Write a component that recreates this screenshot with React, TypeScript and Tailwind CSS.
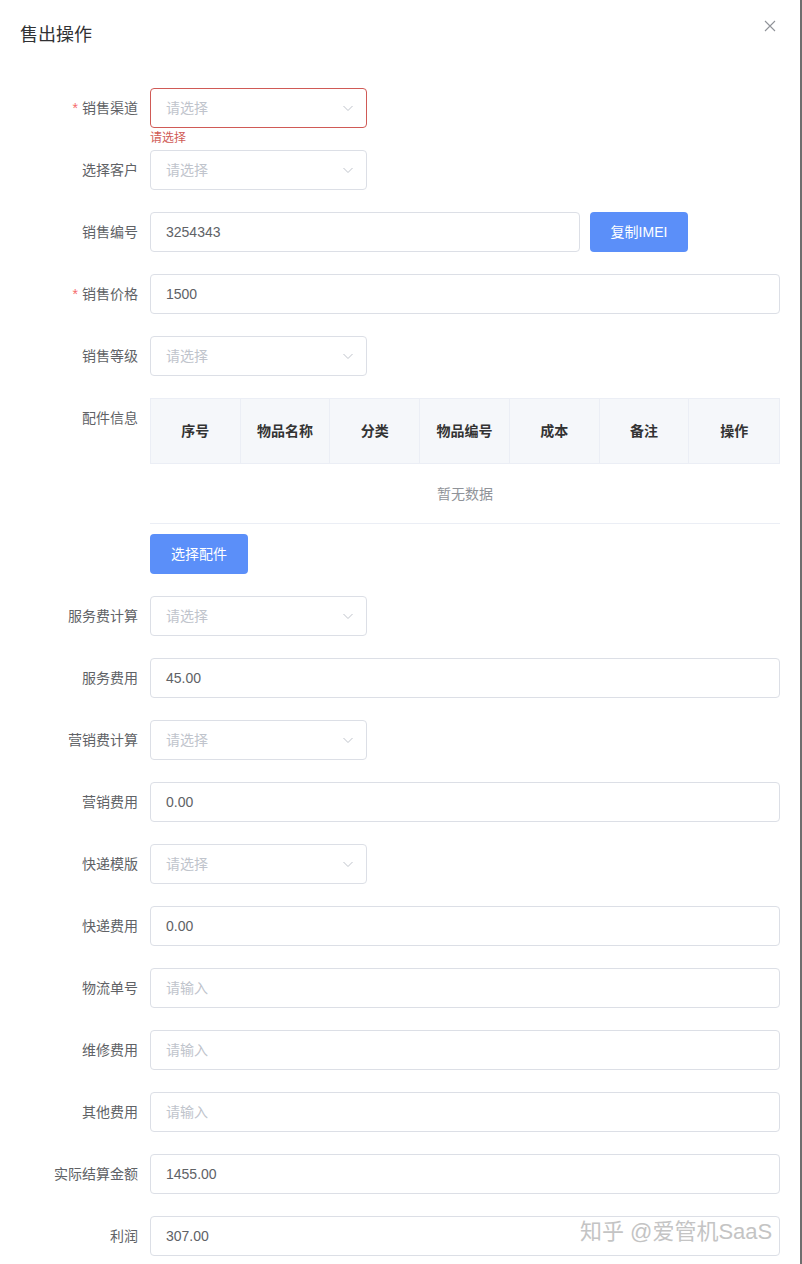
import React from 'react';

const FONT = { fontFamily: '"Liberation Sans", "Noto Sans CJK SC", sans-serif' };

const Chevron = () => (
  <svg width="12" height="12" viewBox="0 0 12 12" className="text-[#c0c4cc]">
    <path d="M1.5 4 L6 8.5 L10.5 4" fill="none" stroke="currentColor" strokeWidth="1" />
  </svg>
);

const Label = ({ text, required }: { text: string; required?: boolean }) => (
  <label className="w-[150px] shrink-0 pr-3 h-10 flex items-center justify-end text-sm text-[#606266]">
    {required && <span className="text-[#f56c6c] mr-1">*</span>}
    {text}
  </label>
);

const Select = ({ error }: { error?: boolean }) => (
  <div
    className={`w-[217px] h-10 rounded border ${
      error ? 'border-[#d05a56]' : 'border-[#dcdfe6]'
    } flex items-center justify-between pl-[15px] pr-3 text-sm text-[#c0c4cc]`}
  >
    <span>请选择</span>
    <Chevron />
  </div>
);

const Input = ({ value, placeholder, className = 'flex-1' }: { value?: string; placeholder?: string; className?: string }) => (
  <div className={`${className} h-10 rounded border border-[#dcdfe6] flex items-center px-[15px] text-sm`}>
    {value ? <span className="text-[#606266]">{value}</span> : <span className="text-[#c0c4cc]">{placeholder}</span>}
  </div>
);

const Row = ({ label, required, children }: { label: string; required?: boolean; children: React.ReactNode }) => (
  <div className="flex mb-[22px]">
    <Label text={label} required={required} />
    <div className="flex-1 flex">{children}</div>
  </div>
);

const COLS = ['序号', '物品名称', '分类', '物品编号', '成本', '备注', '操作'];

export default function App() {
  return (
    <div className="flex bg-white min-h-[1264px]" style={FONT}>
      <div className="w-[800px] relative">
        {/* Header */}
        <div className="h-[66px] flex items-center justify-between pl-5 pr-6">
          <h3 className="text-lg font-normal text-[#303133] leading-6 mt-1">售出操作</h3>
          <svg width="12" height="12" viewBox="0 0 12 12" className="text-[#909399] -mt-3.5">
            <path d="M1 1 L11 11 M11 1 L1 11" stroke="currentColor" strokeWidth="1.1" />
          </svg>
        </div>

        <div className="pt-[22px] pr-5">
          {/* 销售渠道 with error */}
          <div className="flex mb-[22px]">
            <Label text="销售渠道" required />
            <div className="relative">
              <Select error />
              <div className="absolute left-0 top-[42px] text-xs leading-4 text-[#d05a56] whitespace-nowrap">请选择</div>
            </div>
          </div>

          <Row label="选择客户">
            <Select />
          </Row>

          <Row label="销售编号">
            <Input value="3254343" className="w-[430px]" />
            <button className="ml-[10px] w-[98px] h-10 rounded bg-[#5b8ff9] text-white text-sm">复制IMEI</button>
          </Row>

          <Row label="销售价格" required>
            <Input value="1500" />
          </Row>

          <Row label="销售等级">
            <Select />
          </Row>

          {/* 配件信息 */}
          <div className="flex mb-[22px]">
            <Label text="配件信息" />
            <div className="flex-1">
              <div className="border-b border-[#ebeef5]">
                <div className="grid grid-cols-7 h-[66px] bg-[#f5f7fa] border border-[#ebeef5]">
                  {COLS.map((c, i) => (
                    <div
                      key={c}
                      className={`flex items-center justify-center text-sm font-bold text-[#333] ${
                        i < COLS.length - 1 ? 'border-r border-[#ebeef5]' : ''
                      }`}
                    >
                      {c}
                    </div>
                  ))}
                </div>
                <div className="h-[59px] flex items-center justify-center text-sm text-[#909399]">暂无数据</div>
              </div>
              <button className="mt-[10px] w-[98px] h-10 rounded bg-[#5b8ff9] text-white text-sm">选择配件</button>
            </div>
          </div>

          <Row label="服务费计算">
            <Select />
          </Row>
          <Row label="服务费用">
            <Input value="45.00" />
          </Row>
          <Row label="营销费计算">
            <Select />
          </Row>
          <Row label="营销费用">
            <Input value="0.00" />
          </Row>
          <Row label="快递模版">
            <Select />
          </Row>
          <Row label="快递费用">
            <Input value="0.00" />
          </Row>
          <Row label="物流单号">
            <Input placeholder="请输入" />
          </Row>
          <Row label="维修费用">
            <Input placeholder="请输入" />
          </Row>
          <Row label="其他费用">
            <Input placeholder="请输入" />
          </Row>
          <Row label="实际结算金额">
            <Input value="1455.00" />
          </Row>
          <Row label="利润">
            <Input value="307.00" />
          </Row>
        </div>

        {/* watermark */}
        <div className="absolute left-[580px] top-[1216px] text-[22px] leading-8 text-[#c4c4c4] whitespace-nowrap">
          知乎 @爱管机SaaS
        </div>
      </div>
      <div className="w-[2px] bg-[#6e6e6e]" />
    </div>
  );
}
